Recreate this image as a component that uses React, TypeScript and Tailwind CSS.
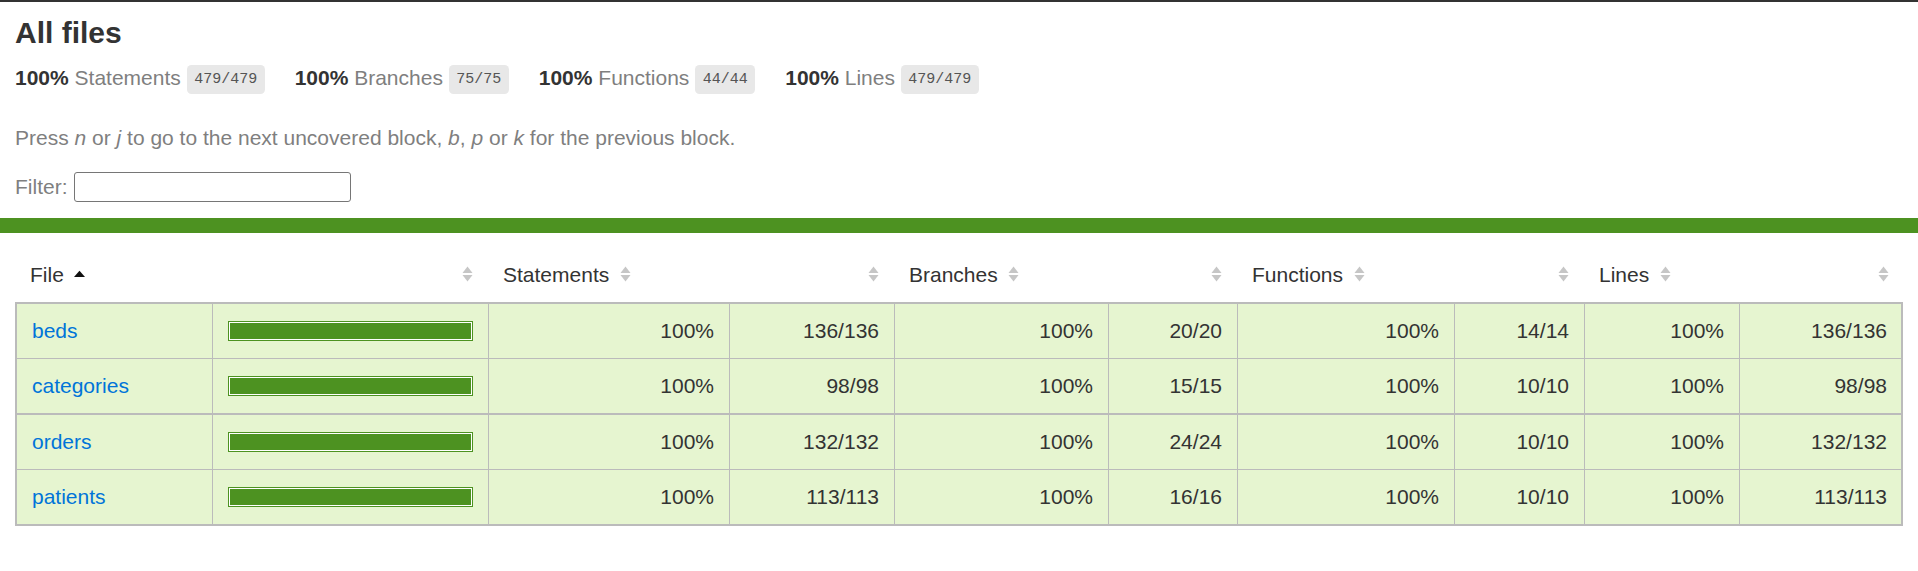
import React from "react";

const SortIcon = () => (
  <svg width="11" height="16" viewBox="0 0 11 16" className="inline-block align-baseline">
    <polygon points="0.5,7 5.5,0.5 10.5,7" fill="#c6c6c6" />
    <polygon points="0.5,9 5.5,15.5 10.5,9" fill="#c6c6c6" />
  </svg>
);

const AscIcon = () => (
  <svg width="11" height="15" viewBox="0 0 11 15" className="inline-block align-baseline">
    <polygon points="0,10 5.5,3.7 11,10" fill="#111" />
  </svg>
);

type Row = { name: string; v: string[] };

const rows: Row[] = [
  { name: "beds", v: ["100%", "136/136", "100%", "20/20", "100%", "14/14", "100%", "136/136"] },
  { name: "categories", v: ["100%", "98/98", "100%", "15/15", "100%", "10/10", "100%", "98/98"] },
  { name: "orders", v: ["100%", "132/132", "100%", "24/24", "100%", "10/10", "100%", "132/132"] },
  { name: "patients", v: ["100%", "113/113", "100%", "16/16", "100%", "10/10", "100%", "113/113"] },
];

const stats = [
  { label: "Statements", frac: "479/479" },
  { label: "Branches", frac: "75/75" },
  { label: "Functions", frac: "44/44" },
  { label: "Lines", frac: "479/479" },
];

export default function App() {
  return (
    <div className="min-h-screen bg-white text-[#333] font-['Liberation_Sans',Arial,sans-serif] text-[21px] leading-[24px]">
      <div className="h-[2px] bg-[#333]" />
      <div className="px-[15px] pt-[14px] pb-[15px]">
        <h1 className="m-0 text-[30px] leading-[34px] font-bold">All files</h1>
        <div className="flex pt-[16px] pb-[15px]">
          {stats.map((s) => (
            <div key={s.label} className="pr-[30px] whitespace-nowrap">
              <span className="font-bold">100% </span>
              <span className="text-[#7f7f7f]">{s.label}</span>{" "}
              <span className="align-middle rounded-[4.5px] bg-[#e8e8e8] px-[7.5px] py-[6px] font-['Liberation_Mono',monospace] text-[15px] leading-[17px] text-[#555]">
                {s.frac}
              </span>
            </div>
          ))}
        </div>
        <p className="my-[21px] text-[#7f7f7f]">
          Press <em>n</em> or <em>j</em> to go to the next uncovered block, <em>b</em>, <em>p</em> or{" "}
          <em>k</em> for the previous block.
        </p>
        <div className="flex h-[32px] items-center text-[#7f7f7f]">
          <span>Filter:</span>
          <input
            type="search"
            className="ml-[6px] h-[30px] w-[277px] rounded-[3px] border border-[#767676] bg-white px-[3px] text-[20px] outline-none"
          />
        </div>
      </div>
      <div className="h-[15px] bg-[#4d9221]" />
      <div className="p-[15px]">
        <div className="grid grid-cols-[197px_276px_241px_165px_214px_129px_217px_130px_155px_165px]">
          <div className="p-[15px] whitespace-nowrap">
            File<span className="ml-[10.5px]"><AscIcon /></span>
          </div>
          <div className="p-[15px] text-right"><SortIcon /></div>
          <div className="p-[15px] whitespace-nowrap">
            Statements<span className="ml-[10.5px]"><SortIcon /></span>
          </div>
          <div className="p-[15px] text-right"><SortIcon /></div>
          <div className="p-[15px] whitespace-nowrap">
            Branches<span className="ml-[10.5px]"><SortIcon /></span>
          </div>
          <div className="p-[15px] text-right"><SortIcon /></div>
          <div className="p-[15px] whitespace-nowrap">
            Functions<span className="ml-[10.5px]"><SortIcon /></span>
          </div>
          <div className="p-[15px] text-right"><SortIcon /></div>
          <div className="p-[15px] whitespace-nowrap">
            Lines<span className="ml-[10.5px]"><SortIcon /></span>
          </div>
          <div className="p-[15px] text-right"><SortIcon /></div>
        </div>
        <div className="border-2 border-[#bbb] bg-[#e6f5d0]">
          {rows.map((r, i) => (
            <div
              key={r.name}
              className={
                "grid grid-cols-[195px_276px_241px_165px_214px_129px_217px_130px_155px_163px] " +
                (i === 0 ? "" : i === 2 ? "border-t-2 border-[#bbb]" : "border-t border-[#bbb]")
              }
            >
              <div className="p-[15px]">
                <a className="text-[#0074d9] no-underline" href="#">
                  {r.name}
                </a>
              </div>
              <div className="flex items-center border-l border-[#bbb] px-[15px]">
                <div className="h-[20px] w-full border border-[#4d9221] bg-white p-px">
                  <div className="h-full w-full bg-[#4d9221]" />
                </div>
              </div>
              {r.v.map((val, j) => (
                <div key={j} className="border-l border-[#bbb] p-[15px] text-right">
                  {val}
                </div>
              ))}
            </div>
          ))}
        </div>
      </div>
    </div>
  );
}
